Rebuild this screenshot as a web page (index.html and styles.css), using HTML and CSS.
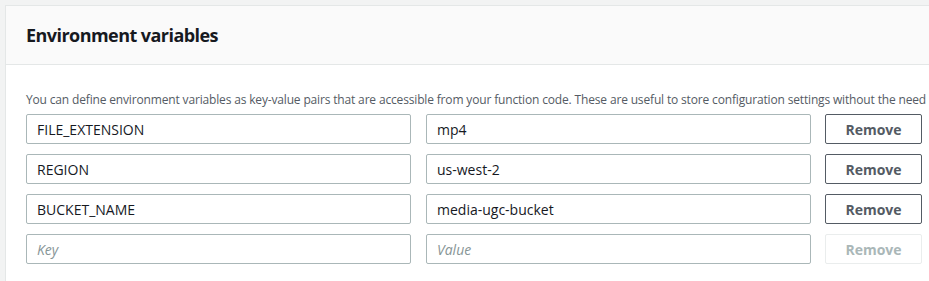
FILE: index.html
```html
<!DOCTYPE html>
<html lang="en">
  <head>
    <meta charset="UTF-8" />
    <title>Environment variables</title>
    <link rel="stylesheet" href="styles.css">
  </head>
  <body>
    <div class="env-card">
      <div class="env-header">
        <h2>Environment variables</h2>
      </div>
      <div class="env-body">
        <p class="env-desc">
          You can define environment variables as key-value pairs that are accessible from your function code. These are useful to store configuration settings without the need
        </p>
        <div class="env-rows">
          <input class="env-input" type="text" value="FILE_EXTENSION" />
          <input class="env-input" type="text" value="mp4" />
          <button class="env-remove" type="button">Remove</button>

          <input class="env-input" type="text" value="REGION" />
          <input class="env-input" type="text" value="us-west-2" />
          <button class="env-remove" type="button">Remove</button>

          <input class="env-input" type="text" value="BUCKET_NAME" />
          <input class="env-input" type="text" value="media-ugc-bucket" />
          <button class="env-remove" type="button">Remove</button>

          <input class="env-input" type="text" placeholder="Key" />
          <input class="env-input" type="text" placeholder="Value" />
          <button class="env-remove" type="button" disabled>Remove</button>
        </div>
      </div>
    </div>
  </body>
</html>
```

FILE: styles.css
```css
html,
body {
  margin: 0;
  background: #f2f3f3;
  font-family: "Open Sans", Arial, sans-serif;
  overflow: hidden;
}

.env-card {
  margin: 5px 0 0 5px;
  width: 1100px;
  background: #fff;
  border: 1px solid #e4e7e7;
  border-right: none;
}

.env-header {
  background: #fafafa;
  border-bottom: 1px solid #e4e7e7;
  padding: 18px 20px;
}

.env-header h2 {
  margin: 0;
  font-size: 18px;
  line-height: 22px;
  font-weight: 700;
  letter-spacing: -0.55px;
  color: #16191f;
}

.env-body {
  padding: 27px 20px 20px 20px;
}

.env-desc {
  margin: 0 0 6px 0;
  font-size: 12px;
  line-height: 16px;
  letter-spacing: -0.16px;
  color: #545b64;
  white-space: nowrap;
}

.env-rows {
  display: grid;
  grid-template-columns: 385px 385px 96px;
  column-gap: 15px;
  row-gap: 10px;
  width: 895px;
}

.env-input {
  box-sizing: border-box;
  height: 30px;
  padding: 4px 10px;
  border: 1px solid #aab7b8;
  border-radius: 2px;
  background: #fff;
  color: #16191f;
  font-family: inherit;
  font-size: 14px;
  outline: none;
}

.env-input::placeholder {
  color: #879596;
  font-style: italic;
}

.env-remove {
  box-sizing: border-box;
  height: 30px;
  margin-left: -1px;
  border: 1px solid #545b64;
  border-radius: 2px;
  background: #fff;
  color: #545b64;
  font-family: inherit;
  font-size: 14px;
  font-weight: 700;
  cursor: pointer;
}

.env-remove:disabled {
  border-color: #eaeded;
  color: #aab7b8;
  cursor: default;
}
```
